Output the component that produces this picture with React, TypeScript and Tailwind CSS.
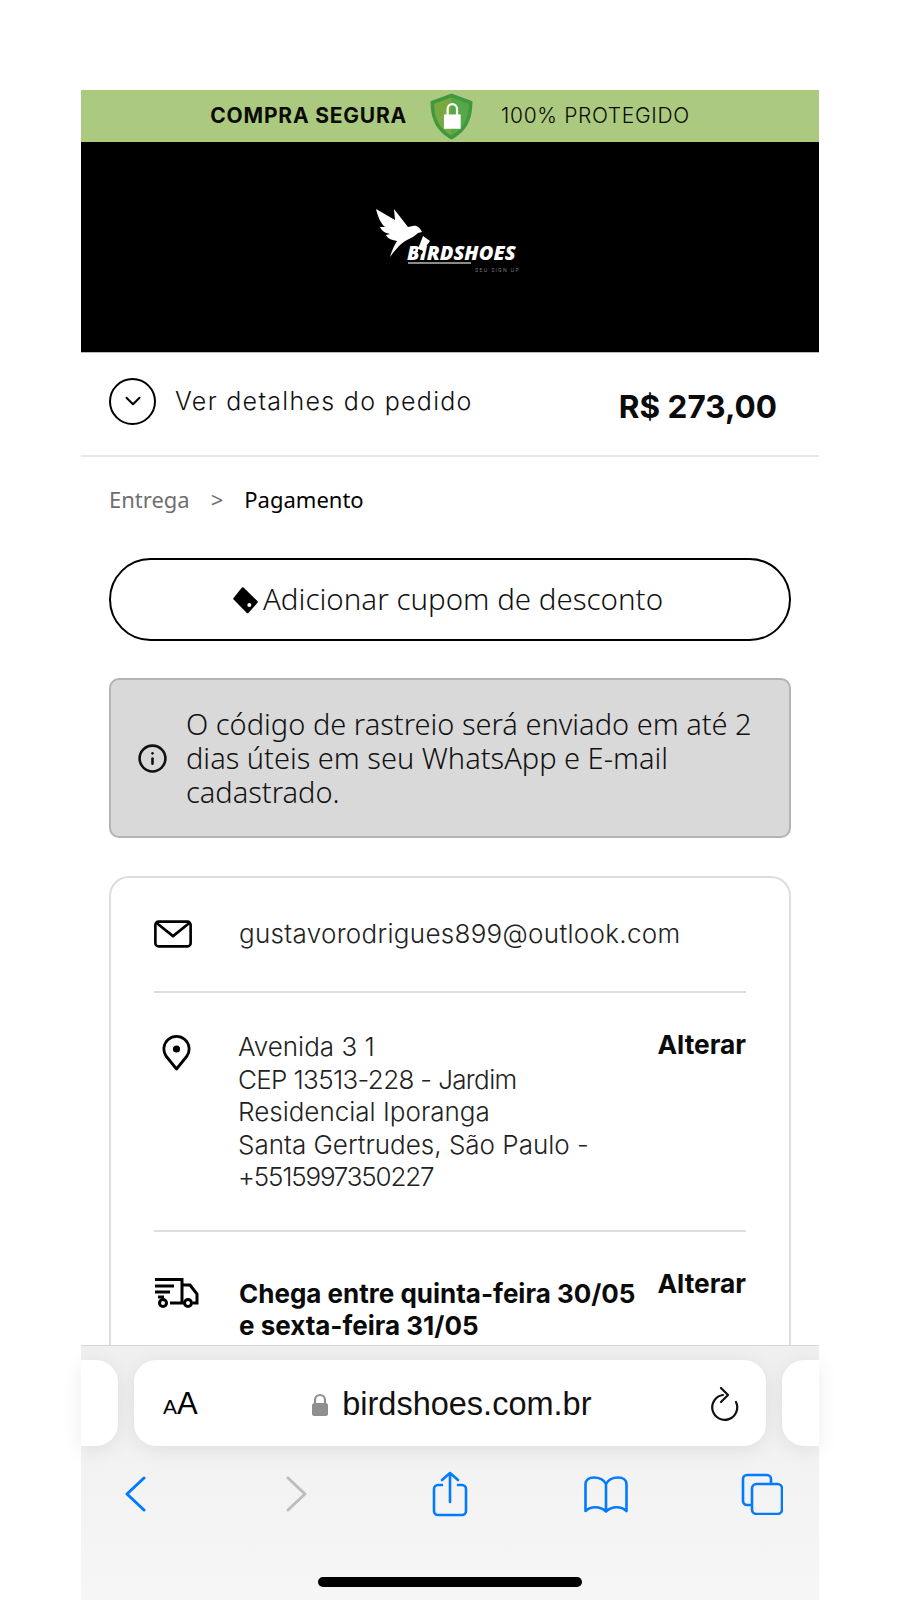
import { Info, ChevronDown } from 'lucide-react'

const montserrat = 'font-["Inter","Liberation_Sans",sans-serif]'

function Shield() {
  return (
    <svg width="43" height="47" viewBox="0 0 42 46" className="mr-[28px] ml-[23px] shrink-0">
      <path d="M21 0.5 L41.5 8 C41.5 24 37 37 21 45.5 C5 37 0.5 24 0.5 8 Z" fill="#3f983f" />
      <path d="M21 4.5 L38 10.5 C38 24 34 34 21 41.5 Z" fill="#55a846" />
      <path d="M21 4.5 L4 10.5 C4 24 8 34 21 41.5 Z" fill="#78a83f" />
      <path d="M17.2 22 V15.5 a4.6 4.6 0 0 1 9.2 0 V22" fill="none" stroke="#fff" strokeWidth="2.2" />
      <rect x="13.6" y="21" width="16.4" height="14" fill="#fff" />
    </svg>
  )
}

function Logo() {
  return (
    <div className="relative mr-[9px] mb-[20px] h-[59px] w-[141px]">
      <svg width="60" height="52" viewBox="0 0 60 52" className="absolute top-0 left-0">
        <path
          d="M1 1 L20 12 L19 1 L33 19 L38 18 C42 17 45 20 47 24 L43 25 C40 28 36 30 32 32 C26 35 21 41 15 49 C17 42 19 38 22 33 C16 32 12 30 11 27 L15 26 C10 25 7 23 5 19 L10 19 C6 16 3 9 1 1 Z"
          fill="#fff"
        />
      </svg>
      <span className="absolute top-[38px] left-[32px] font-['Open_Sans',sans-serif] text-[20px] leading-[14px] font-extrabold tracking-[0px] text-white italic">
        BIRDSHOES
      </span>
      <svg width="16" height="20" viewBox="0 0 16 20" className="absolute top-[27px] left-[43px]">
        <path d="M5 1 L12 6 L5 16 L0 14 Z" fill="#fff" />
        <path d="M5 16 L0 14 L-1 19 L4 19 Z" fill="#000" />
      </svg>
      <div className="absolute top-[54px] left-[33px] h-[2px] w-[63px] bg-[#8a8a8a]" />
      <span className="absolute top-[59px] left-[100px] text-[5px] leading-[6px] tracking-[1.2px] whitespace-nowrap text-[#777]">SEU SIGN UP</span>
    </div>
  )
}

function TabPill({ className }: { className: string }) {
  return <div className={`h-[86px] bg-white shadow-[0_4px_20px_rgba(0,0,0,0.08)] ${className}`} />
}

function ToolbarIcon({ children, className }: { children: React.ReactNode; className?: string }) {
  return <div className={`flex h-[50px] w-[50px] items-center justify-center ${className ?? ''}`}>{children}</div>
}

function App() {
  return (
    <div className={`flex h-[1600px] w-[900px] flex-col overflow-hidden bg-white px-[81px] pt-[90px] ${montserrat}`}>
      <div className="flex h-[52px] shrink-0 items-center justify-center bg-[#abc97f] text-[21px] text-[#0b0b0b]">
        <span className="font-bold tracking-[0.8px]">COMPRA SEGURA</span>
        <Shield />
        <span className="font-light tracking-[0.65px]">100% PROTEGIDO</span>
      </div>

      <div className="flex h-[211px] shrink-0 items-center justify-center border-b border-[#bbbbbb] bg-black">
        <Logo />
      </div>

      <div className="flex h-[104px] shrink-0 items-center justify-between border-b-2 border-[#e8e8e8] pr-[42px] pb-[6px] pl-[28px]">
        <div className="flex items-center">
          <div className="flex h-[47px] w-[47px] items-center justify-center rounded-full border-2 border-black">
            <ChevronDown size={26} strokeWidth={1.8} />
          </div>
          <span className="mt-[2px] ml-[19px] text-[25px] font-light tracking-[1.3px] text-[#111]">Ver detalhes do pedido</span>
        </div>
        <span className="mt-[12px] text-[31.5px] font-bold text-[#0b0b0b]">R$ 273,00</span>
      </div>

      <div className="min-h-0 flex-1 overflow-hidden px-[28px]">
        <div className="mt-[30px] flex items-center font-['Noto_Sans',sans-serif] text-[22px] leading-[24px]">
          <span className="text-[#6f6f6f]">Entrega</span>
          <span className="mx-[21px] text-[#6f6f6f]">&gt;</span>
          <span className="text-black">Pagamento</span>
        </div>

        <button
          type="button"
          className="mt-[47px] flex h-[83px] w-full items-center justify-center gap-[5px] rounded-full border-2 border-black pr-[5px] font-['Noto_Sans',sans-serif] text-[29.5px] font-light text-[#111]"
        >
          <svg width="26" height="28" viewBox="0 0 26 28">
            <path d="M10.7 2.5 L2.5 12.7 L15.7 26 L24.5 16 Z" fill="#000" stroke="#000" strokeWidth="2.5" strokeLinejoin="round" />
            <circle cx="17.3" cy="19" r="2" fill="#fff" />
          </svg>
          Adicionar cupom de desconto
        </button>

        <div className="mt-[37px] flex h-[160px] items-center rounded-[10px] border-2 border-[#b3b3b3] bg-[#d9d9d9] pr-[20px] pl-[26px] font-['Noto_Sans',sans-serif] text-[29px] leading-[34px] font-light text-[#111]">
          <Info size={31} strokeWidth={2} className="shrink-0" />
          <p className="ml-[18px]">O código de rastreio será enviado em até 2 dias úteis em seu WhatsApp e E-mail cadastrado.</p>
        </div>

        <div className="mt-[38px] rounded-t-[20px] border-2 border-b-0 border-[#dddddd] px-[43px] pb-[40px] text-[26px] font-light text-[#222]">
          <div className="flex h-[115px] items-center border-b-2 border-[#dddddd] pb-[2px]">
            <svg width="38" height="28" viewBox="0 0 36 26" fill="none" stroke="#000" strokeWidth="2.5" strokeLinejoin="round" className="shrink-0">
              <rect x="1.3" y="1.3" width="33.4" height="23.4" rx="3" />
              <path d="M2.5 2.5 L18 15 L33.5 2.5" />
            </svg>
            <span className="ml-[47px] tracking-[0.3px]">gustavorodrigues899@outlook.com</span>
          </div>

          <div className="flex h-[239px] items-start border-b-2 border-[#dddddd] pt-[38px]">
            <svg width="29" height="36" viewBox="0 0 29 36" fill="none" stroke="#000" strokeWidth="2.8" strokeLinejoin="round" className="mt-[4px] ml-[8px] shrink-0">
              <path d="M14.5 34 L4 21 A12.6 12.6 0 1 1 25 21 Z" />
              <circle cx="14.5" cy="14" r="3.6" fill="#000" stroke="none" />
            </svg>
            <p className="ml-[47px] flex-1 leading-[32.5px]">
              Avenida 3 1
              <br />
              <span className="tracking-[-0.65px]">CEP 13513-228 - Jardim</span>
              <br />
              Residencial Iporanga
              <br />
              Santa Gertrudes, São Paulo -
              <br />
              <span className="tracking-[-1.2px]">+5515997350227</span>
            </p>
            <span className="-mt-[6px] text-[26.3px] font-bold text-[#0b0b0b]">Alterar</span>
          </div>

          <div className="flex items-start pt-[36px]">
            <svg width="46" height="32" viewBox="0 0 46 32" fill="none" stroke="#000" strokeWidth="3" className="mt-[9px] shrink-0">
              <path d="M1 2.5 H28 V26 H16 M1 9 H20 M1 15 H16 M4 20 H10 M28 8 H36 L43 17 V26 H39" />
              <circle cx="9" cy="26" r="3.5" />
              <circle cx="34" cy="26" r="3.5" />
            </svg>
            <p className="ml-[39px] flex-1 pt-[10px] text-[26px] leading-[31.5px] font-bold text-[#0b0b0b]">
              Chega entre quinta-feira 30/05 e sexta-feira 31/05
            </p>
            <span className="-mt-[4px] ml-[12px] text-[26.3px] font-bold text-[#0b0b0b]">Alterar</span>
          </div>
        </div>
      </div>

      <div className="h-[255px] shrink-0 border-t border-[#d6d6d6] bg-linear-to-b from-[#efefef] to-[#f6f6f6] pt-[14px]">
        <div className="flex items-start gap-[16px]">
          <TabPill className="w-[37px] rounded-r-[22px]" />
          <div className="flex h-[86px] w-[632px] shrink-0 items-center rounded-[22px] bg-white pt-[3px] pr-[26px] pl-[29px] shadow-[0_4px_20px_rgba(0,0,0,0.08)]">
            <span className="font-['Liberation_Sans',sans-serif] text-black">
              <span className="text-[21px]">A</span>
              <span className="text-[31px]">A</span>
            </span>
            <div className="flex flex-1 items-center justify-center pr-[5px] font-['Liberation_Sans',sans-serif] text-[32.5px] text-[#111]">
              <svg width="18" height="24" viewBox="0 0 18 24" className="mr-[13px]">
                <path d="M4 11 V7 a5 5 0 0 1 10 0 V11" fill="none" stroke="#8e8e93" strokeWidth="2.2" />
                <rect x="1" y="10" width="16" height="13" rx="2.5" fill="#8e8e93" />
              </svg>
              birdshoes.com.br
            </div>
            <svg width="30" height="36" viewBox="0 0 30 36" fill="none" stroke="#111" strokeWidth="2.2" strokeLinecap="round" strokeLinejoin="round">
              <path d="M13 8 A12.5 12.5 0 1 0 26 15" />
              <path d="M11 1 L18 8 L11 15" />
            </svg>
          </div>
          <TabPill className="w-[37px] rounded-l-[22px]" />
        </div>

        <div className="mt-[23px] flex items-center pl-[29px]">
          <ToolbarIcon>
            <svg width="21" height="36" viewBox="0 0 21 36" fill="none" stroke="#007aff" strokeWidth="3" strokeLinecap="round" strokeLinejoin="round">
              <path d="M19 2 L2 18 L19 34" />
            </svg>
          </ToolbarIcon>
          <ToolbarIcon className="ml-[111px]">
            <svg width="21" height="36" viewBox="0 0 21 36" fill="none" stroke="#bdbdbd" strokeWidth="3" strokeLinecap="round" strokeLinejoin="round">
              <path d="M2 2 L19 18 L2 34" />
            </svg>
          </ToolbarIcon>
          <ToolbarIcon className="ml-[104px]">
            <svg width="36" height="46" viewBox="0 0 36 46" fill="none" stroke="#007aff" strokeWidth="2.6" strokeLinecap="round" strokeLinejoin="round">
              <path d="M10 14 H6 a4 4 0 0 0 -4 4 V40 a4 4 0 0 0 4 4 H30 a4 4 0 0 0 4 -4 V18 a4 4 0 0 0 -4 -4 H26" />
              <path d="M18 31 V2 M10 9 L18 2 L26 9" />
            </svg>
          </ToolbarIcon>
          <ToolbarIcon className="ml-[106px]">
            <svg width="44" height="37" viewBox="0 0 44 37" fill="none" stroke="#007aff" strokeWidth="2.6" strokeLinecap="round" strokeLinejoin="round">
              <path d="M22 8 C20 4 15 1.5 10 1.5 C5 1.5 1.5 4 1.5 8 V35 C7 30 16 30 22 35.5 C28 30 37 30 42.5 35 V8 C42.5 4 39 1.5 34 1.5 C29 1.5 24 4 22 8 Z M22 8 V35" />
            </svg>
          </ToolbarIcon>
          <ToolbarIcon className="ml-[106px]">
            <svg width="42" height="42" viewBox="0 0 42 42" fill="none" stroke="#007aff" strokeWidth="2.6" strokeLinecap="round" strokeLinejoin="round">
              <path d="M9 32 H6 a4 4 0 0 1 -4 -4 V6 a4 4 0 0 1 4 -4 H26 a4 4 0 0 1 4 4 V11" />
              <rect x="11" y="11" width="30" height="30" rx="4.5" />
            </svg>
          </ToolbarIcon>
        </div>

        <div className="mx-auto mt-[58px] h-[10px] w-[264px] rounded-full bg-black" />
      </div>
    </div>
  )
}

export default App
